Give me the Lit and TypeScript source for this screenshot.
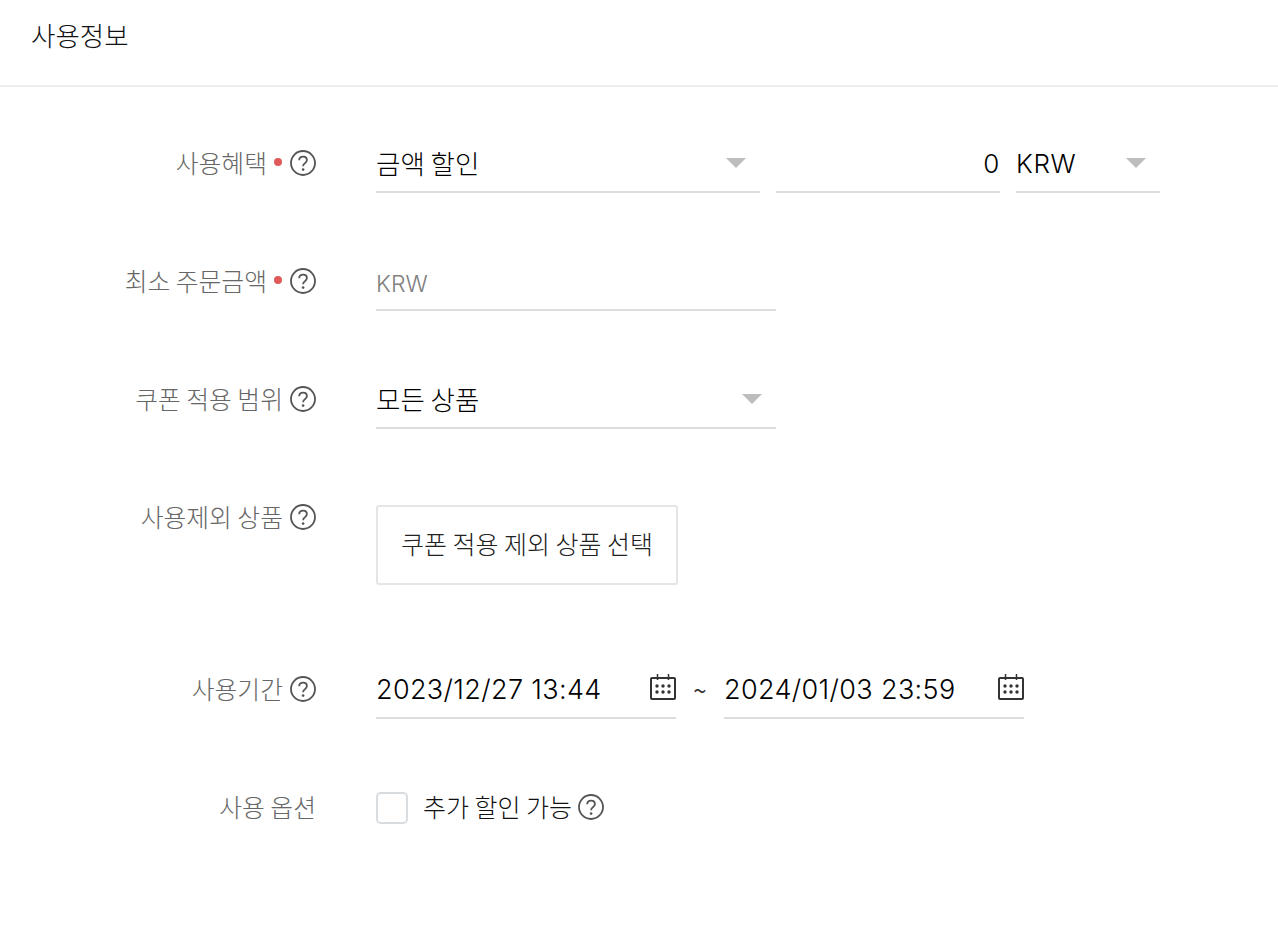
import { LitElement, html, css, svg } from "lit";
import { customElement } from "lit/decorators.js";

const help = html`<svg class="help" width="26" height="26" viewBox="0 0 26 26" fill="none" stroke="#555" stroke-width="1.800"><circle cx="13" cy="13" r="12"/><path d="M9.2 10.3c0-2.2 1.7-3.7 3.9-3.7s3.800 1.400 3.800 3.400c0 1.500-.9 2.400-2 3.200-1.200.8-1.800 1.500-1.800 3"/><circle cx="13.100" cy="19.600" r="1.300" fill="#555" stroke="none"/></svg>`;

const cal = html`<svg class="cal" width="26" height="26" viewBox="0 0 26 26" fill="none" stroke="#333" stroke-width="2"><rect x="1" y="4" width="24" height="21" rx="1"/><path d="M7.500 0v6M18.500 0v6" stroke-width="1.500"/><g fill="#333" stroke="none">${svg`<circle cx="7" cy="12" r="1.700"/><circle cx="13" cy="12" r="1.700"/><circle cx="19" cy="12" r="1.700"/><circle cx="7" cy="18" r="1.700"/><circle cx="13" cy="18" r="1.700"/><circle cx="19" cy="18" r="1.700"/>`}</g></svg>`;

const caret = html`<svg class="caret" width="20" height="10" viewBox="0 0 20 10"><path d="M0 0h20L10 10z" fill="#bdbdbd"/></svg>`;

@customElement("app-root")
export class AppRoot extends LitElement {
  static styles = css`
    :host {
      display: block;
      width: 1278px;
      height: 930px;
      background: #fff;
      font-family: "Noto Sans CJK KR", sans-serif;
      font-weight: 300;
      color: #000;
      overflow: hidden;
    }
    .head {
      height: 87px;
      box-sizing: border-box;
      padding: 15px 31px 0;
      font-size: 26.5px;
      line-height: 40px;
      color: #111;
      border-bottom: 2px solid #eee;
    }
    .form {
      display: flex;
      flex-direction: column;
      padding-top: 46px;
    }
    .row {
      display: grid;
      grid-template-columns: 316px 1fr;
      column-gap: 60px;
      height: 118px;
      align-items: start;
    }
    .row.btn { height: 172px; }
    .label {
      display: flex;
      justify-content: flex-end;
      align-items: center;
      height: 60px;
      font-size: 24.8px;
      color: #666;
      white-space: nowrap;
    }
    .text { margin-bottom: 2px; }
    .dot {
      width: 8px;
      height: 8px;
      border-radius: 50%;
      background: #e05a5a;
      margin-left: 7px;
      margin-top: -2px;
    }
    .dot + .help { margin-left: 8px; }
    .help { flex: none; margin-left: 7px; }
    .fields { display: flex; gap: 16px; }
    .field {
      display: flex;
      align-items: center;
      justify-content: space-between;
      box-sizing: border-box;
      height: 60px;
      border-bottom: 2px solid #ddd;
      font-size: 26.5px;
      white-space: nowrap;
    }
    .w384 { width: 384px; padding-right: 14px; }
    .w400 { width: 400px; padding-right: 14px; }
    .w224 { width: 224px; justify-content: flex-end; }
    .w144 { width: 144px; padding-right: 14px; }
    .latin {
      font-family: Inter, sans-serif;
      font-size: 26px;
      letter-spacing: 0.6px;
      padding-top: 3px;
    }
    .date-text {
      font-family: Inter, sans-serif;
      font-size: 27px;
      letter-spacing: 0.35px;
      padding-top: 2px;
    }
    .ph {
      font-family: Inter, sans-serif;
      color: #808080;
      font-size: 23px;
      padding-top: 7px;
    }
    .field .caret { flex: none; margin-top: 2px; }
    .button {
      display: flex;
      align-items: center;
      box-sizing: border-box;
      width: 302px;
      height: 80px;
      margin-top: 18px;
      padding: 0 0 4px 23px;
      border: 2px solid #e5e5e5;
      border-radius: 3px;
      font-size: 25px;
      color: #222;
      white-space: nowrap;
    }
    .dates { display: flex; align-items: flex-start; }
    .date { width: 300px; padding-right: 0; }
    .date .cal { margin-top: -3px; }
    .tilde {
      width: 48px;
      height: 60px;
      display: flex;
      align-items: center;
      justify-content: center;
      font-size: 24px;
      font-weight: 400;
      color: #333;
    }
    .check {
      display: flex;
      align-items: center;
      height: 60px;
      font-size: 25px;
      color: #111;
      white-space: nowrap;
    }
    .box {
      width: 32px;
      height: 32px;
      box-sizing: border-box;
      border: 2px solid #d8dcdf;
      border-radius: 5px;
      margin: 1px 15px 0 0;
      flex: none;
    }
    .check .help { margin-left: 6px; }
  `;

  render() {
    return html`
      <div class="head">사용정보</div>
      <div class="form">
        <div class="row">
          <div class="label"><span class="text">사용혜택</span><span class="dot"></span>${help}</div>
          <div class="fields">
            <div class="field w384"><span>금액 할인</span>${caret}</div>
            <div class="field w224"><span class="latin">0</span></div>
            <div class="field w144"><span class="latin">KRW</span>${caret}</div>
          </div>
        </div>
        <div class="row">
          <div class="label"><span class="text">최소 주문금액</span><span class="dot"></span>${help}</div>
          <div class="fields"><div class="field w400"><span class="ph">KRW</span></div></div>
        </div>
        <div class="row">
          <div class="label"><span class="text">쿠폰 적용 범위</span>${help}</div>
          <div class="fields"><div class="field w400"><span>모든 상품</span>${caret}</div></div>
        </div>
        <div class="row btn">
          <div class="label"><span class="text">사용제외 상품</span>${help}</div>
          <div class="fields"><div class="button">쿠폰 적용 제외 상품 선택</div></div>
        </div>
        <div class="row">
          <div class="label"><span class="text">사용기간</span>${help}</div>
          <div class="dates">
            <div class="field date"><span class="date-text">2023/12/27 13:44</span>${cal}</div>
            <div class="tilde">~</div>
            <div class="field date"><span class="date-text">2024/01/03 23:59</span>${cal}</div>
          </div>
        </div>
        <div class="row">
          <div class="label"><span class="text">사용 옵션</span></div>
          <div class="check"><span class="box"></span><span class="text">추가 할인 가능</span>${help}</div>
        </div>
      </div>
    `;
  }
}
